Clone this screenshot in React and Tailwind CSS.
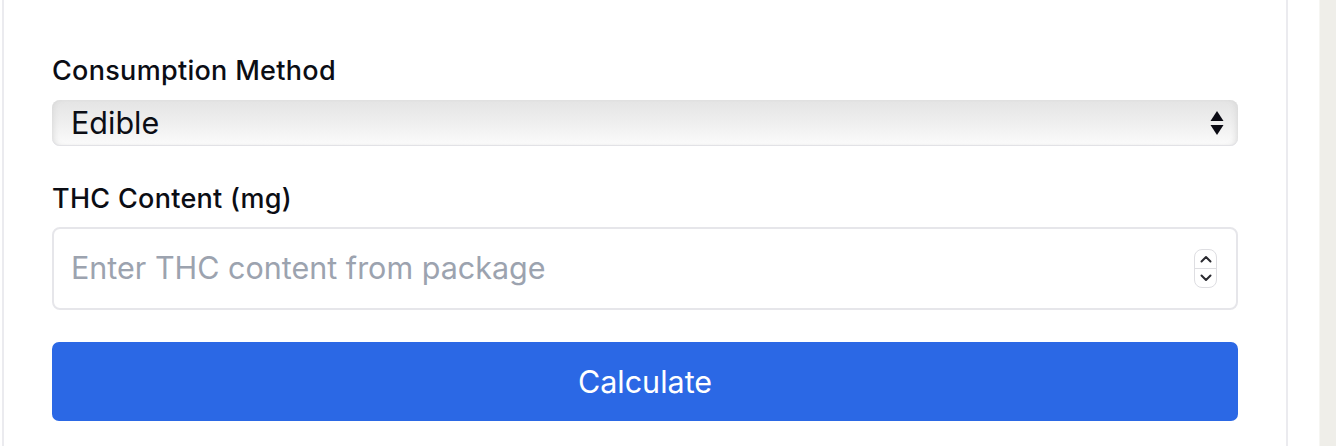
import React from 'react';

function SelectArrows() {
  return (
    <svg width="14" height="26" viewBox="0 0 14 26" className="shrink-0">
      <path d="M7 1 L13.5 11 L0.5 11 Z" fill="#0b0b14" />
      <path d="M0.5 15 L13.5 15 L7 25 Z" fill="#0b0b14" />
    </svg>
  );
}

function Spinner() {
  return (
    <div className="flex h-[39px] w-[23px] flex-col overflow-hidden rounded-[8px] border border-[#dedee2] bg-white">
      <div className="flex flex-1 items-center justify-center border-b border-[#dedee2]">
        <svg width="12" height="8" viewBox="0 0 12 8"><path d="M1.5 6.5 L6 2 L10.5 6.5" fill="none" stroke="#2a2a30" strokeWidth="2" strokeLinecap="round" strokeLinejoin="round" /></svg>
      </div>
      <div className="flex flex-1 items-center justify-center">
        <svg width="12" height="8" viewBox="0 0 12 8"><path d="M1.5 1.5 L6 6 L10.5 1.5" fill="none" stroke="#2a2a30" strokeWidth="2" strokeLinecap="round" strokeLinejoin="round" /></svg>
      </div>
    </div>
  );
}

export default function App() {
  return (
    <div className="flex h-[446px] w-[1336px] overflow-hidden bg-white" style={{ fontFamily: 'Inter, "Noto Sans", sans-serif' }}>
      <div className="flex flex-1">
        <div className="ml-[2px] h-full w-[1286px] border-x-2 border-[#ebebef] bg-white px-[48px] pt-[55px]">
          <label className="block text-[27px] leading-[32px] font-medium tracking-[0.3px] text-[#0b0d14]">Consumption Method</label>
          <div className="mt-[13px] flex h-[46px] items-center justify-between rounded-[8px] bg-gradient-to-b from-[#e4e4e4] via-[#efefef] to-[#fbfbfb] pl-[19px] pr-[14px] shadow-[inset_0_-1px_0_#e2e2e6,inset_-4px_0_6px_-3px_#d6d6d6,inset_4px_0_6px_-3px_#d6d6d6]">
            <span className="text-[30.5px] leading-none text-[#0b0d14]">Edible</span>
            <SelectArrows />
          </div>

          <label className="mt-[37px] block text-[27px] leading-[32px] font-medium tracking-[0.3px] text-[#0b0d14]">THC Content (mg)</label>
          <div className="mt-[12px] flex h-[83px] items-center justify-between rounded-[8px] border-2 border-[#e6e6ea] bg-white pl-[17px] pr-[19px]">
            <span className="text-[30.5px] leading-none text-[#9ca3af]">Enter THC content from package</span>
            <Spinner />
          </div>

          <button className="mt-[32px] flex h-[79px] w-full items-center justify-center rounded-[7px] bg-[#2b68e5] text-[30.5px] text-white">
            Calculate
          </button>
        </div>
      </div>
      <div className="h-full w-[17px] border-l border-[#f6f6f3] bg-[#efeee9]" />
    </div>
  );
}
